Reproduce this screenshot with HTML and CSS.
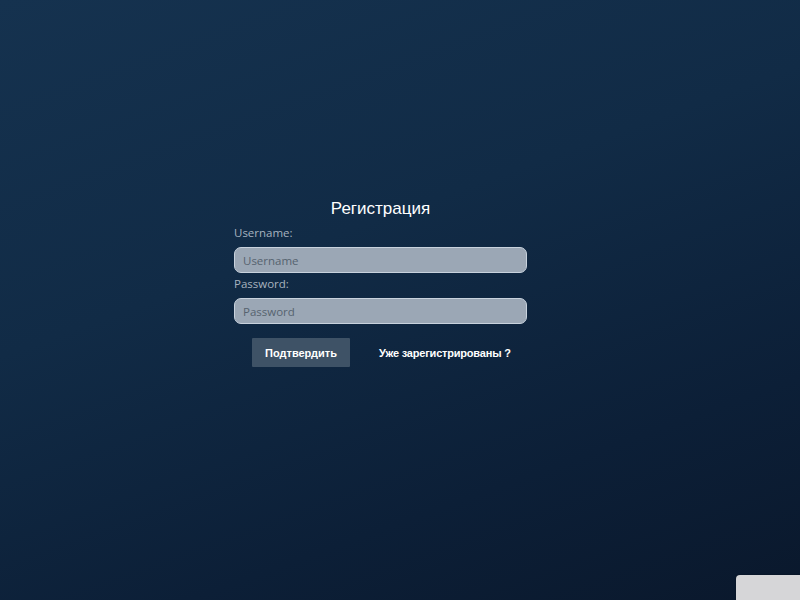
FILE: index.html
```html
<!DOCTYPE html>
<html lang="ru">
<head>
<meta charset="utf-8">
<title>Регистрация</title>
<link rel="stylesheet" href="styles.css">
</head>
<body>
<main class="page">
  <form class="form">
    <h1 class="title">Регистрация</h1>
    <label class="label" for="u">Username:</label>
    <input class="field" id="u" type="text" placeholder="Username">
    <label class="label" for="p">Password:</label>
    <input class="field" id="p" type="password" placeholder="Password">
    <div class="actions">
      <button class="btn" type="button">Подтвердить</button>
      <a class="link" href="#">Уже зарегистрированы ?</a>
    </div>
  </form>
</main>
<div class="corner"></div>
</body>
</html>
```

FILE: styles.css
```css
html, body {
  margin: 0;
  height: 100%;
}
body {
  width: 800px;
  height: 600px;
  overflow: hidden;
  position: relative;
  background: linear-gradient(160deg, #15324f 0%, #112b46 40%, #0c1f37 75%, #0a182c 100%);
  font-family: "Open Sans", "Liberation Sans", sans-serif;
}
.page {
  padding: 198px 0 0 234px;
}
.form {
  width: 293px;
  display: flex;
  flex-direction: column;
}
.title {
  margin: 0 0 5px;
  text-align: center;
  font-family: "Liberation Sans", Arial, sans-serif;
  font-weight: 400;
  font-size: 17px;
  line-height: 22px;
  color: #ffffff;
}
.label {
  font-size: 11.5px;
  line-height: 16px;
  color: #a7b2bf;
  margin-bottom: 6px;
}
.field {
  box-sizing: border-box;
  height: 26px;
  width: 293px;
  margin: 0 0 3px;
  padding: 0 8px;
  border: 1.5px solid #c8d2dd;
  border-radius: 7px;
  background: #9ba7b5;
  font-family: "Open Sans", sans-serif;
  font-size: 11.5px;
  color: #2c3a48;
  outline: none;
}
.field::placeholder {
  color: #56636f;
}
.actions {
  display: flex;
  align-items: center;
  margin-top: 11px;
  padding-left: 18px;
  gap: 29px;
}
.btn {
  width: 98px;
  height: 29px;
  border: 0;
  border-radius: 1px;
  background: #3e5266;
  color: #ffffff;
  font-family: "Liberation Sans", Arial, sans-serif;
  font-weight: 700;
  font-size: 11px;
  padding: 0;
}
.link {
  color: #ffffff;
  text-decoration: none;
  font-family: "Liberation Sans", Arial, sans-serif;
  font-weight: 700;
  font-size: 11px;
  letter-spacing: -0.2px;
}
.corner {
  position: absolute;
  left: 736px;
  top: 575px;
  width: 80px;
  height: 40px;
  background: #d6d6d8;
  border-radius: 4px;
  box-shadow: 0 0 2px rgba(0,0,0,0.4);
}
```
